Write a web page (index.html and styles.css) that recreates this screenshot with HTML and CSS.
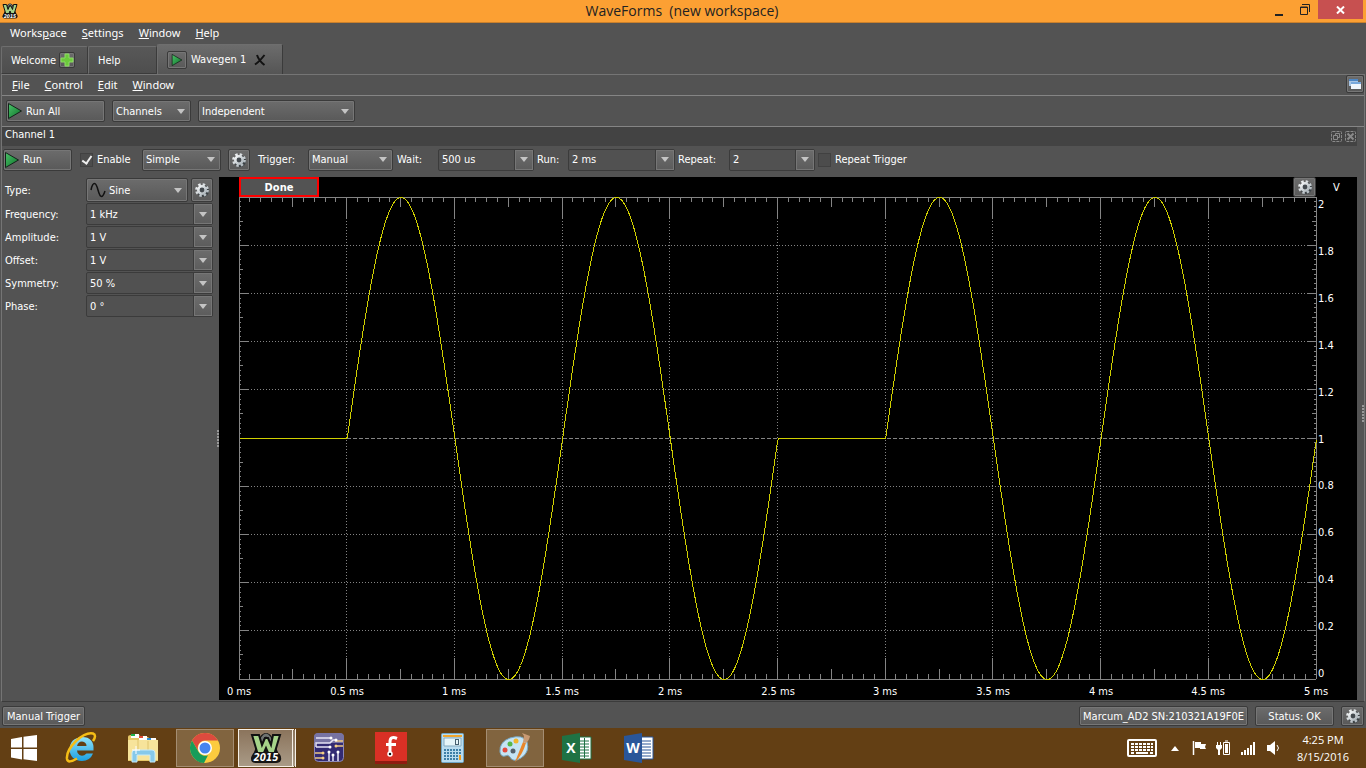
FILE: index.html
```html
<!DOCTYPE html>
<html lang="en">
<head>
    <meta charset="UTF-8">
    <meta name="viewport" content="width=device-width, initial-scale=1.0">
    <title>WaveForms (new workspace)</title>
    <link rel="stylesheet" href="styles.css">
    <script src="script.js" defer></script>
</head>
<body>
    <!-- shared icons -->
    <svg class="defs" width="0" height="0">
        <defs>
            <linearGradient id="green" x1="0" y1="0" x2="1" y2="1">
                <stop offset="0" stop-color="#4cc46a"/>
                <stop offset="1" stop-color="#0c7028"/>
            </linearGradient>
            <linearGradient id="steel" x1="0" y1="0" x2="1" y2="1">
                <stop offset="0" stop-color="#f4f6f7"/>
                <stop offset="1" stop-color="#a9b2b8"/>
            </linearGradient>
            <linearGradient id="ie" x1="0" y1="0" x2="0" y2="1">
                <stop offset="0" stop-color="#8fe3fb"/>
                <stop offset="1" stop-color="#1c9fe0"/>
            </linearGradient>
        </defs>
        <symbol id="play" viewBox="0 0 14 16">
            <path d="M.5 .5 L13.500 8 L.5 15.500 Z" fill="url(#green)" stroke="#14221a"/>
        </symbol>
        <symbol id="gear" viewBox="0 0 16 16">
            <circle cx="9" cy="9" r="6" fill="#3b4145"/>
            <circle cx="8" cy="8" r="5.600" fill="none" stroke="url(#steel)" stroke-width="2.600" stroke-dasharray="2.400 2"/>
            <circle cx="8" cy="8" r="3.700" fill="#43494e" stroke="url(#steel)" stroke-width="2.600"/>
        </symbol>
        <symbol id="wf" viewBox="0 0 32 32">
            <path d="M8 16Q11 3 16 3Q21 3 24 16L28 25H4z" fill="#222" stroke="#111" stroke-width="4"/>
            <path d="M9 16Q12 3 16 3Q20 3 23 16" fill="none" stroke="#6f7371" stroke-width="3"/>
            <path d="M2 3h7l3 10 3-7h3l3 7 2-10h7l-6 20h-5l-3-7-3 7H8z" fill="#a5d389" stroke="#111" stroke-width="2"/>
            <path d="M5 20h22q5 3 4 8-1 3-5 3H6q-5 0-5-4 0-4 4-7z" fill="#151515"/>
        </symbol>
    </svg>

    <header class="titlebar">
        <svg class="app-icon" viewBox="0 0 32 32" width="16" height="16"><use href="#wf" width="32" height="32"/><text x="16" y="29" text-anchor="middle" class="wf-year">2015</text></svg>
        <h1>WaveForms&nbsp; (new workspace)</h1>
        <div class="window-btns">
            <button aria-label="Minimize"><svg width="8" height="12"><path d="M0 10h8v2H0z" fill="#222"/></svg></button>
            <button aria-label="Restore"><svg width="10" height="11"><path d="M.5 3h7v7.5h-7zM0 3.5h8M2 .5h7.5V8" fill="none" stroke="#222"/></svg></button>
            <button class="close" aria-label="Close"><svg width="9" height="8"><path d="M1 .5l7 7M8 .5l-7 7" stroke="#fff" stroke-width="2"/></svg></button>
        </div>
    </header>

    <nav class="menu">
        <a href="#">Works<u>p</u>ace</a>
        <a href="#"><u>S</u>ettings</a>
        <a href="#"><u>W</u>indow</a>
        <a href="#"><u>H</u>elp</a>
    </nav>

    <div class="tabs">
        <div class="tab tab-welcome">Welcome
            <button class="icon-btn" aria-label="Add instrument"><svg width="14" height="14"><path d="M5 1h4v4h4v4H9v4H5V9H1V5h4z" fill="#6cc93c" stroke="#8fdc66"/></svg></button>
        </div>
        <div class="tab tab-help">Help</div>
        <div class="tab active">
            <button class="icon-btn run-tab" aria-label="Run"><svg width="12" height="12"><use href="#play"/></svg></button>
            <span>Wavegen 1</span>
            <svg width="12" height="12"><path d="M1 10.500Q5 8 10.500 1M3 1Q5 7 10.500 11" fill="none" stroke="#121212" stroke-width="2"/></svg>
        </div>
    </div>

    <main class="instrument">
        <nav class="menu inner-menu">
            <a href="#"><u>F</u>ile</a>
            <a href="#"><u>C</u>ontrol</a>
            <a href="#"><u>E</u>dit</a>
            <a href="#"><u>W</u>indow</a>
            <button class="icon-btn undock" aria-label="Undock">
                <svg width="12" height="12"><rect x="0" y="1" width="9" height="7" fill="#a9c5e4"/><path d="M0 1h9v2H0z" fill="#4d86c4"/><rect x="2" y="4" width="10" height="7" fill="#f1f6fc"/><path d="M2 4h10v2H2z" fill="#79a9dc"/></svg>
            </button>
        </nav>

        <div class="toolbar">
            <button class="btn run-all"><svg width="14" height="16"><use href="#play"/></svg>Run All</button>
            <span class="select channels"><select aria-label="Channels"><option>Channels</option></select></span>
            <span class="select mode"><select aria-label="Mode"><option>Independent</option></select></span>
        </div>

        <div class="channel-title">
            <h2>Channel 1</h2>
            <button aria-label="Float"><svg width="11" height="11"><rect x=".5" y=".5" width="10" height="10" rx="1" stroke-dasharray="3 1"/><path d="M2.500 4.500h4v4h-4zM4.500 4V2.500h4v4H7"/></svg></button>
            <button aria-label="Close channel"><svg width="11" height="11"><rect x=".5" y=".5" width="10" height="10" rx="1" stroke-dasharray="3 1"/><path d="M2.500 2.500l6 6M8.500 2.500l-6 6" stroke-width="2"/></svg></button>
        </div>

        <div class="channel-bar">
            <button class="btn run"><svg width="14" height="16"><use href="#play"/></svg>Run</button>
            <label class="check enable"><input type="checkbox" checked>Enable</label>
            <span class="select simple"><select aria-label="View"><option>Simple</option></select></span>
            <button class="icon-btn gear" aria-label="Channel options"><svg width="16" height="16"><use href="#gear"/></svg></button>
            <label class="trigger-label" for="trigger">Trigger:</label>
            <span class="select trigger"><select id="trigger"><option>Manual</option></select></span>
            <label class="wait-label" for="wait">Wait:</label>
            <span class="combo wait"><input type="text" id="wait" value="500 us"><button aria-label="Wait values"></button></span>
            <label class="run-label" for="runtime">Run:</label>
            <span class="combo runtime"><input type="text" id="runtime" value="2 ms"><button aria-label="Run values"></button></span>
            <label class="repeat-label" for="repeat">Repeat:</label>
            <span class="combo repeat"><input type="text" id="repeat" value="2"><button aria-label="Repeat values"></button></span>
            <label class="check"><input type="checkbox">Repeat Trigger</label>
        </div>

        <div class="workarea">
            <aside class="params">
                <div class="param">
                    <label for="type">Type:</label>
                    <span class="select type"><svg width="16" height="16"><path d="M1 8C2 3 3 1.500 4.500 1.500C8 1.500 8 14.500 11.500 14.500C13 14.500 14 12 15 9" fill="none" stroke="#111" stroke-width="1.500"/></svg><select id="type"><option>Sine</option></select></span>
                    <button class="icon-btn gear" aria-label="Type options"><svg width="16" height="16"><use href="#gear"/></svg></button>
                </div>
                <div class="param">
                    <label for="freq">Frequency:</label>
                    <span class="combo"><input type="text" id="freq" value="1 kHz"><button aria-label="Frequency values"></button></span>
                </div>
                <div class="param">
                    <label for="amp">Amplitude:</label>
                    <span class="combo"><input type="text" id="amp" value="1 V"><button aria-label="Amplitude values"></button></span>
                </div>
                <div class="param">
                    <label for="offset">Offset:</label>
                    <span class="combo"><input type="text" id="offset" value="1 V"><button aria-label="Offset values"></button></span>
                </div>
                <div class="param">
                    <label for="sym">Symmetry:</label>
                    <span class="combo"><input type="text" id="sym" value="50 %"><button aria-label="Symmetry values"></button></span>
                </div>
                <div class="param">
                    <label for="phase">Phase:</label>
                    <span class="combo"><input type="text" id="phase" value="0 °"><button aria-label="Phase values"></button></span>
                </div>
            </aside>
            <div class="splitter"></div>
            <section class="scope">
                <div class="scope-head">
                    <span class="state">Done</span>
                    <button class="icon-btn gear" aria-label="Plot options"><svg width="16" height="16"><use href="#gear"/></svg></button>
                    <span class="unit">V</span>
                </div>
                <div class="plot"><svg id="plot"></svg></div>
            </section>
            <div class="splitter right"></div>
        </div>
    </main>

    <footer class="statusbar">
        <button class="btn">Manual Trigger</button>
        <button class="btn device">Marcum_AD2 SN:210321A19F0E</button>
        <button class="btn status">Status: OK</button>
        <button class="icon-btn gear" aria-label="Device options"><svg width="16" height="16"><use href="#gear"/></svg></button>
    </footer>

    <div class="taskbar">
        <button class="start" aria-label="Start">
            <svg width="26" height="26" fill="#fff"><path d="M0 4l11-2v10.500H0zM12.500 1.700L26 0v12.500H12.500zM0 14h11v10.500L0 22.500zM12.500 14H26v12l-13.500-1.800z"/></svg>
        </button>
        <button class="task" aria-label="Internet Explorer">
            <svg width="32" height="32">
                <path d="M28.500 18.500Q29.500 5 17 5Q5 6 4.500 17Q5 28.500 17 29Q25 29 28 21.500H21.500Q18 25 14.500 23Q12 21.500 12 18.500z" fill="url(#ie)"/>
                <path d="M12 14Q13 9.500 17 9.500Q21.500 10 21.500 14z" fill="#633f14"/>
                <path d="M28 9Q32 3 28 1.500Q21 0 11 9Q1 19 2 27Q3 32 12 26.500" fill="none" stroke="#f5bd16" stroke-width="2.500"/>
            </svg>
        </button>
        <button class="task" aria-label="File Explorer">
            <svg width="32" height="30">
                <path d="M1 4Q1 2 4 2h8l2 2h7l2 2h6l2 4v18H1z" fill="#e6c766"/>
                <path d="M4 1h8v4H4z" fill="#fff"/><path d="M4 1h4v2H4z" fill="#21b24b"/>
                <path d="M12 3h8v4h-8z" fill="#fff"/><path d="M12 3h4v2h-4z" fill="#e04a32"/>
                <path d="M20 5h9v4h-9z" fill="#fff"/><path d="M20 5h4v2h-4z" fill="#2c8fd8"/>
                <path d="M1 7h30v20H1z" fill="#f7e49b"/>
                <path d="M11 7v12M21 8v10" stroke="#dfc46d"/>
                <path d="M5 29v-9q0-3 3-3h17q3 0 3 3v9h-5v-7H10v7z" fill="#86c9ea" stroke="#c7ebf8"/>
                <path d="M9 13v8M5 17h8" stroke="#fff"/>
            </svg>
        </button>
        <button class="task open" aria-label="Chrome">
            <svg width="30" height="30">
                <circle cx="15" cy="15" r="15" fill="#fccb3e"/>
                <path d="M2 7.500A15 15 0 0 1 28 7.500H15A7.500 7.500 0 0 0 8.500 18.500z" fill="#dc4b3e"/>
                <path d="M2 7.500L8.500 18.700A7.500 7.500 0 0 0 18 22.300L14 30A15 15 0 0 1 2 7.500z" fill="#179c5a"/>
                <circle cx="15" cy="15" r="7" fill="#fff"/><circle cx="15" cy="15" r="5.500" fill="#4684ee"/>
            </svg>
        </button>
        <button class="task current" aria-label="WaveForms 2015"><svg width="32" height="32"><use href="#wf" width="32" height="32"/><text x="16" y="29" text-anchor="middle" class="wf-year">2015</text></svg></button>
        <button class="task" aria-label="Circuit tool">
            <svg width="30" height="30">
                <rect x=".5" y=".5" width="29" height="28" rx="4" fill="#332b73" stroke="#8c88b8"/>
                <path d="M0 4q0-4 4-4h22q4 0 4 4v6H0z" fill="#7773a3"/>
                <g fill="none" stroke="#e6e4f5" stroke-width="1.500"><path d="M2 5h15M2 14V10h14l3-3h3M2 14h14M15 28v-9M19 28v-7M24 28v-9"/></g>
                <g fill="none" stroke="#edc985" stroke-width="1.500"><path d="M21 8h8M21 13h8M1 20h8M1 25h8"/></g>
                <g fill="#fff"><circle cx="17" cy="5" r="1.500"/><circle cx="22" cy="7" r="1.500"/><circle cx="16" cy="14" r="1.500"/><circle cx="15" cy="19" r="1.500"/><circle cx="19" cy="22" r="1.500"/><circle cx="24" cy="19" r="1.500"/></g>
                <g fill="#f5cf84"><circle cx="22" cy="13" r="1.500"/><circle cx="9" cy="20" r="1.500"/><circle cx="9" cy="25" r="1.500"/></g>
            </svg>
        </button>
        <button class="task" aria-label="Fritzing">
            <svg width="32" height="32"><path d="M0 0h32v32H0z" fill="#d93025"/><path d="M0 29h32v3H0z" fill="#8f1b10"/><path d="M22 6.500Q15 3.500 15 10V21M11 12.500h10" fill="none" stroke="#fff" stroke-width="3"/><circle cx="15" cy="22" r="2" fill="#111" stroke="#fff" stroke-width="1.500"/></svg>
        </button>
        <button class="task" aria-label="Calculator">
            <svg width="24" height="30">
                <rect x=".5" y=".5" width="22" height="29" rx="1" fill="#b9dcef" stroke="#6fa5c4"/>
                <path d="M2 2h19v2H2z" fill="#efa52e"/><path d="M3 5h17v8H3z" fill="#e6f5f9" stroke="#86aabf"/>
                <rect x="14.500" y="6.500" width="3" height="5" fill="none" stroke="#47606f"/>
                <path d="M3 17h17M3 20h17M3 23h17M3 26h17" stroke="#3e7fa6" stroke-width="2" stroke-dasharray="2 1"/>
                <path d="M18 22h2v5h-2z" fill="#f09c1e"/>
            </svg>
        </button>
        <button class="task open" aria-label="Paint">
            <svg width="32" height="32">
                <path d="M1 20Q0 10 11 6Q24 2 28 10Q31 20 22 26Q14 31 11 25Q9 22 6 24Q2 25 1 20z" fill="#c5e4f4" stroke="#76a9c6"/>
                <circle cx="6" cy="18" r="2.500" fill="#e34b3d"/><circle cx="11" cy="12" r="2.500" fill="#55b64a"/><circle cx="17" cy="9" r="2.500" fill="#f2b62e"/><circle cx="14" cy="19" r="2.500" fill="#54616b"/>
                <path d="M16 30L24 10L27 11Q23 24 16 30z" fill="#e8862a"/><path d="M24 10l1-6-2-3 8 3q-1 5-4 7z" fill="#c99a73"/>
            </svg>
        </button>
        <button class="task" aria-label="Excel">
            <svg width="30" height="30"><path d="M16 4h13v22H16z" fill="#fff" stroke="#1f7244"/><path d="M18 8h9M18 11h9M18 14h9M18 17h9M18 20h9M18 23h9" stroke="#1f7244"/><path d="M22.500 5v20" stroke="#1f7244"/><path d="M0 3l18-3v30L0 27z" fill="#1f7244"/><text x="9" y="20" text-anchor="middle" class="office">X</text></svg>
        </button>
        <button class="task" aria-label="Word">
            <svg width="30" height="30"><path d="M16 4h13v22H16z" fill="#fff" stroke="#2a5699"/><path d="M18 8h9M18 11h9M18 14h9M18 17h9M18 20h9M18 23h9" stroke="#2a5699"/><path d="M0 3l18-3v30L0 27z" fill="#2a5699"/><text x="9" y="20" text-anchor="middle" class="office">W</text></svg>
        </button>

        <div class="tray">
            <svg class="keyboard" width="30" height="18"><rect x="1" y="1" width="28" height="16" rx="1" fill="none" stroke="#fff" stroke-width="2"/><path d="M4 5h22M4 8h22M4 11h22" stroke="#fff" stroke-width="2" stroke-dasharray="3 1"/><path d="M4 14h3M9 14h12M23 14h3" stroke="#fff" stroke-width="2"/></svg>
            <svg class="more" width="8" height="5"><path d="M4 0l4 5H0z" fill="#fff"/></svg>
            <svg class="flag" width="15" height="16"><path d="M1.500 1v14" stroke="#fff" stroke-width="1.500"/><path d="M3 2h6v2h5l-1 3 1 2H8V8H3z" fill="#fff"/></svg>
            <svg class="battery" width="15" height="16"><path d="M7.500 2.500h6v12h-6zM9 1h3" fill="none" stroke="#fff"/><path d="M9 4h3v9H9z" fill="#fff"/><path d="M1.500 2v4M4.500 2v4" stroke="#fff"/><path d="M0 5h6v3L4 10v5H2v-5L0 8z" fill="#fff"/></svg>
            <svg class="signal" width="16" height="14"><path d="M1 11h2v3H1zM4 9h2v5H4zM7 7h2v7H7zM10 4h2v10h-2zM13 1h2v13h-2z" fill="#fff"/></svg>
            <svg class="speaker" width="14" height="14"><path d="M0 4h3l5-4v14l-5-4H0z" fill="#fff"/><path d="M10 4q3 3 0 6" fill="none" stroke="#fff"/></svg>
            <div class="clock"><span>4:25 PM</span><span>8/15/2016</span></div>
        </div>
    </div>
</body>
</html>
```
FILE: styles.css
```css
* {
    box-sizing: border-box;
}

body {
    margin: 0;
    height: 100vh;
    display: flex;
    flex-direction: column;
    overflow: hidden;
    background: #535353;
    color: #fff;
    font-family: "DejaVu Sans Condensed", "Noto Sans", sans-serif;
    font-size: 11px;
}

svg {
    display: block;
    flex: none;
}

button,
input,
select {
    font: inherit;
    color: inherit;
    margin: 0;
    padding: 0;
    border: none;
    background: none;
    border-radius: 0;
}

.defs {
    position: absolute;
}

/* title bar */
.titlebar {
    flex: none;
    display: flex;
    align-items: center;
    height: 23px;
    padding-left: 2px;
    background: #fca033;
    border-bottom: 1px solid #c9802c;
}

.titlebar h1 {
    flex: 1;
    margin: 0;
    padding-left: 80px;
    text-align: center;
    font-family: "Open Sans", sans-serif;
    font-size: 14px;
    font-weight: normal;
    line-height: 22px;
    color: #222;
}

.window-btns {
    display: flex;
    align-self: flex-start;
    padding-right: 3px;
}

.window-btns button {
    display: flex;
    align-items: center;
    justify-content: center;
    width: 26px;
    height: 19px;
}

.window-btns .close {
    width: 45px;
    background: #c75050;
}

/* menus */
.menu {
    flex: none;
    display: flex;
    align-items: center;
    gap: 15px;
    height: 21px;
    padding: 0 0 2px 10px;
    font-family: "Noto Sans", sans-serif;
    font-size: 11px;
}

.menu a {
    color: #fff;
    text-decoration: none;
}

/* tabs */
.tabs {
    flex: none;
    display: flex;
    align-items: flex-end;
    height: 30px;
    padding-left: 1px;
}

.tab {
    display: flex;
    align-items: center;
    height: 28px;
    border: 1px solid #3b3b3b;
    border-top-color: #6e6e6e;
    border-left-color: #6e6e6e;
    border-radius: 2px 2px 0 0;
    background: linear-gradient(#585858, #4e4e4e);
}

.tab-welcome {
    width: 87px;
    padding-left: 9px;
    gap: 3px;
}

.tab-help {
    width: 69px;
    padding-left: 9px;
}

.tab.active {
    width: 126px;
    height: 30px;
    padding-left: 9px;
    gap: 4px;
    border-bottom: none;
    background: linear-gradient(#6c6c6c, #555);
}

.tab.active span {
    margin-right: 4px;
}

/* buttons and fields */
.btn,
.icon-btn,
.select {
    display: flex;
    align-items: center;
    border: 1px solid #3a3a3a;
    border-radius: 2px;
    background: linear-gradient(#6c6c6c, #595959);
    box-shadow: inset 0 0 0 1px #767676;
}

.icon-btn {
    flex: none;
    justify-content: center;
    width: 16px;
    height: 16px;
}

.run-tab {
    width: 20px;
    height: 18px;
}

.gear {
    width: 22px;
    height: 22px;
}

.btn {
    height: 22px;
    gap: 4px;
    padding: 0 4px 0 1px;
    white-space: nowrap;
}

.select {
    height: 22px;
    padding: 0 5px 0 3px;
}

.select select {
    flex: 1;
    min-width: 0;
    appearance: none;
    outline: none;
}

.select::after,
.combo button::after {
    content: "";
    border: 4px solid transparent;
    border-top: 5px solid #c4c4c4;
    border-bottom: none;
}

.combo {
    display: flex;
    height: 22px;
    border: 1px solid #3b3b3b;
    border-radius: 2px;
    background: #515151;
}

.combo input {
    flex: 1;
    width: 100%;
    min-width: 0;
    padding-left: 3px;
    outline: none;
}

.combo button {
    flex: none;
    display: flex;
    align-items: center;
    justify-content: center;
    width: 19px;
    border-left: 1px solid #3b3b3b;
    background: linear-gradient(#6c6c6c, #5c5c5c);
    box-shadow: inset 0 0 0 1px #767676;
}

.check {
    display: flex;
    align-items: center;
    gap: 4px;
}

.check input {
    appearance: none;
    display: flex;
    align-items: center;
    justify-content: center;
    width: 13px;
    height: 14px;
    border: 1px solid #414141;
    background: #4c4c4c;
}

.check input:checked::after {
    content: "";
    width: 4px;
    height: 8px;
    margin-bottom: 2px;
    border: solid #eee;
    border-width: 0 2px 2px 0;
    transform: rotate(35deg);
}

/* instrument window */
.instrument {
    flex: 1;
    min-height: 0;
    display: flex;
    flex-direction: column;
    margin: 0 1px;
    border: 1px solid #757575;
    border-bottom-color: #3b3b3b;
}

.inner-menu {
    border-bottom: 1px solid #858585;
}

.undock {
    width: 18px;
    height: 18px;
    margin-left: auto;
}

.toolbar {
    flex: none;
    display: flex;
    align-items: center;
    gap: 7px;
    height: 31px;
    padding-left: 4px;
    border-bottom: 1px solid #858585;
}

.run-all {
    width: 99px;
}

.channels {
    width: 79px;
}

.mode {
    width: 157px;
}

.channel-title {
    flex: none;
    display: flex;
    align-items: center;
    gap: 3px;
    height: 19px;
    margin-right: 7px;
    padding: 0 1px 0 3px;
    background: #434343;
}

.channel-title h2 {
    flex: 1;
    margin: 0;
    padding-bottom: 4px;
    font-size: 11px;
    font-weight: normal;
}

.channel-title svg {
    fill: none;
    stroke: #8a8a8a;
}

.channel-bar {
    flex: none;
    display: flex;
    align-items: center;
    height: 31px;
    padding: 0 0 4px 1px;
}

.channel-bar .run {
    width: 69px;
    margin-right: 8px;
}

.enable {
    width: 62px;
}

.simple {
    width: 79px;
    margin-right: 7px;
}

.trigger-label {
    width: 58px;
    padding-left: 8px;
}

.trigger {
    width: 85px;
    margin-right: 4px;
}

.wait-label {
    width: 41px;
}

.wait {
    width: 96px;
    margin-right: 3px;
}

.run-label {
    width: 31px;
}

.runtime {
    width: 107px;
    margin-right: 3px;
}

.repeat-label {
    width: 51px;
}

.repeat {
    width: 86px;
    margin-right: 3px;
}

.workarea {
    flex: 1;
    min-height: 0;
    display: flex;
    padding-bottom: 1px;
}

.params {
    display: flex;
    flex-direction: column;
    gap: 1px;
    width: 211px;
    padding: 1px 0 0 3px;
}

.param {
    display: flex;
    align-items: center;
}

.param label {
    flex: none;
    width: 81px;
}

.param .combo {
    flex: 1;
}

.type {
    flex: 1;
    height: 24px;
    gap: 3px;
    margin-right: 3px;
}

.param .gear {
    height: 24px;
}

.splitter {
    flex: none;
    display: flex;
    align-items: center;
    justify-content: flex-end;
    width: 6px;
}

.splitter.right {
    width: 7px;
    padding-bottom: 50px;
}

.splitter::after {
    content: "";
    width: 2px;
    height: 17px;
    background: repeating-linear-gradient(#999 0 2px, #535353 2px 3px);
}

.scope {
    flex: 1;
    min-width: 0;
    display: flex;
    flex-direction: column;
    background: #000;
}

.scope-head {
    flex: none;
    display: flex;
    height: 20px;
    padding-left: 20px;
}

.state {
    width: 80px;
    border: 2px solid #f00;
    background: #535353;
    text-align: center;
    font-weight: bold;
    line-height: 18px;
}

.scope-head .gear {
    height: 20px;
    width: 23px;
    margin-left: auto;
}

.unit {
    width: 41px;
    text-align: center;
    line-height: 22px;
}

.plot {
    flex: 1;
    min-height: 0;
}

.plot svg {
    width: 100%;
    height: 100%;
}

.axis {
    fill: none;
    stroke: #848484;
    shape-rendering: crispEdges;
}

.grid {
    stroke-dasharray: 1 2;
}

.mid {
    stroke-dasharray: 4 2;
}

.wave {
    fill: none;
    stroke: #d0d000;
    shape-rendering: crispEdges;
}

.plot text {
    fill: #fff;
}

/* status bar */
.statusbar {
    flex: none;
    display: flex;
    align-items: center;
    gap: 7px;
    height: 26px;
    padding: 3px 2px 1px;
}

.statusbar .btn {
    justify-content: center;
    height: 20px;
    padding: 0 4px;
}

.statusbar .device {
    width: 169px;
    margin-left: auto;
}

.statusbar .status {
    width: 79px;
}

.statusbar .gear {
    width: 23px;
    height: 20px;
}

/* taskbar */
.taskbar {
    flex: none;
    display: flex;
    gap: 4px;
    height: 40px;
    background: #633f14;
    font-family: "Open Sans", sans-serif;
    font-size: 11px;
}

.start,
.task {
    display: flex;
    align-items: center;
    justify-content: center;
}

.start {
    width: 48px;
}

.task {
    width: 58px;
    height: 38px;
    margin-top: 1px;
}

.open {
    border: 1px solid #a48d72;
    background: #81643f;
}

.current {
    border: 1px solid #f5efe6;
    border-right: 4px double #f5efe6;
    background: linear-gradient(#8b745c, #a99a86);
}

.wf-year {
    fill: #fff;
    font: italic bold 10px "DejaVu Sans Condensed", sans-serif;
}

.office {
    fill: #fff;
    font: bold 14px "Open Sans", sans-serif;
}

.tray {
    display: flex;
    align-items: center;
    margin-left: auto;
    padding-right: 14px;
}

.keyboard {
    margin-right: 14px;
}

.more {
    margin-right: 13px;
}

.flag,
.battery {
    margin-right: 9px;
}

.signal {
    margin-right: 11px;
}

.speaker {
    margin-right: 13px;
}

.clock {
    display: flex;
    flex-direction: column;
    align-items: center;
    width: 58px;
    line-height: 17px;
}
```
FILE: script.js
```javascript
const NS = 'http://www.w3.org/2000/svg';
const svg = document.getElementById('plot');

function add(tag, attrs, text) {
    const el = document.createElementNS(NS, tag);
    for (const key in attrs) el.setAttribute(key, attrs[key]);
    if (text) el.textContent = text;
    svg.appendChild(el);
}

// 500 us wait, then two periods of 1 kHz, repeated
function volts(t) {
    const local = t % 2.5;
    return local < 0.5 ? 1 : 1 + Math.sin(2 * Math.PI * (local - 0.5));
}

function draw() {
    svg.textContent = '';
    const box = svg.getBoundingClientRect();
    const left = 20;
    const right = Math.round(box.width) - 41;
    const top = 0;
    const bottom = Math.round(box.height) - 21;
    const w = right - left;
    const h = bottom - top;
    let ticks = `M${left} ${top + 0.5}H${right}M${left} ${bottom + 0.5}H${right}M${left + 0.5} ${top}V${bottom}M${right + 0.5} ${top}V${bottom}`;
    let grid = '';

    for (let i = 1; i < 100; i++) {
        const x = Math.floor(left + w * i / 100) + 0.5;
        const y = Math.floor(top + h * i / 100) + 0.5;
        const xLen = i % 10 === 0 ? 21 : i % 5 === 0 ? 10 : 5;
        const yLen = i % 10 === 0 ? 9 : i % 5 === 0 ? 4 : 2;
        ticks += `M${left} ${y}h${yLen}M${right} ${y}h${-yLen}`;
        ticks += `M${x} ${top}v${xLen}M${x} ${bottom}v${-xLen}`;
        if (i % 10 === 0) {
            grid += `M${x} ${top + 21}V${bottom - 21}`;
            if (i !== 50) grid += `M${left + 9} ${y}H${right - 9}`;
        }
    }
    const midY = Math.round(top + h / 2) + 0.5;
    add('path', { class: 'axis', d: ticks });
    add('path', { class: 'axis grid', d: grid });
    add('path', { class: 'axis mid', d: `M${left} ${midY}H${right}` });

    let wave = '';
    for (let px = 0; px <= w; px++) {
        const y = midY - (volts(Math.min(px / w * 5, 4.999)) - 1) * h / 2;
        wave += (px ? 'L' : 'M') + (left + px + 0.5) + ' ' + y.toFixed(1);
    }
    add('path', { class: 'wave', d: wave });

    for (let i = 0; i <= 10; i++) {
        const x = Math.round(left + w * i / 10);
        add('text', { x: x, y: bottom + 16, 'text-anchor': 'middle' }, i / 2 + ' ms');
        // scale labels are kept inside the frame
        const y = Math.round(top + 11 + (h - 13) * i / 10);
        add('text', { x: right + 2, y: y }, String((20 - 2 * i) / 10));
    }
}

draw();
window.addEventListener('resize', draw);
```
